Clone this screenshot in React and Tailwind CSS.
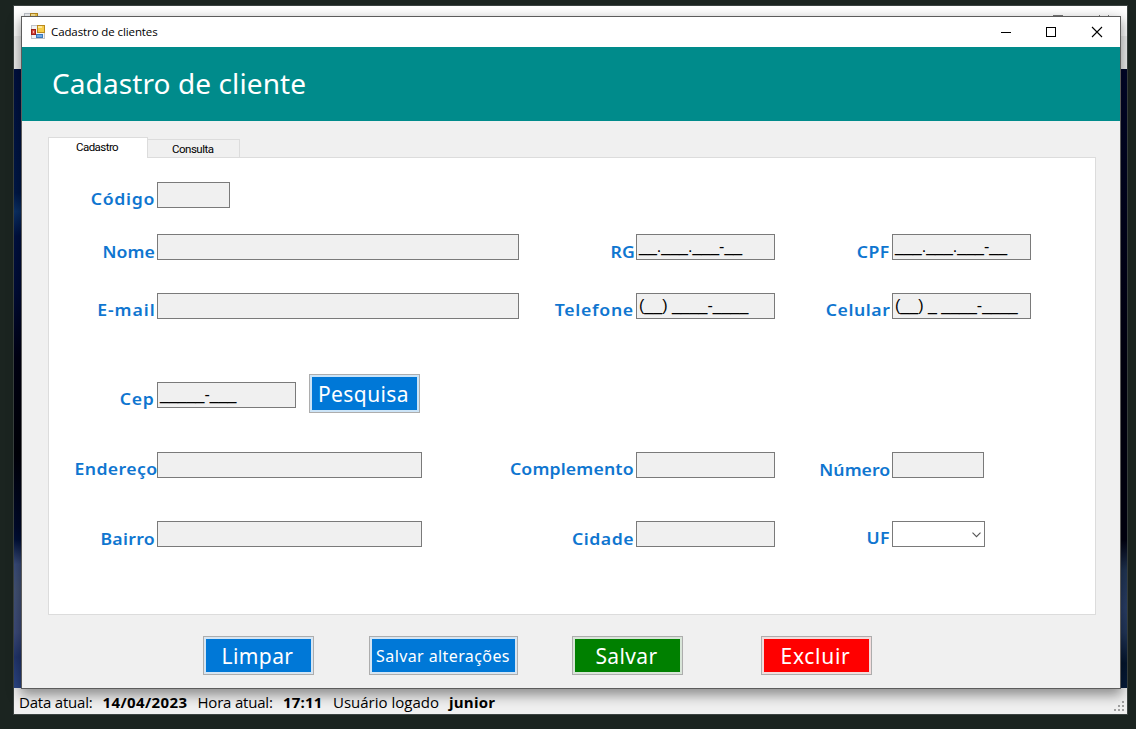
import React from "react";

function FormIcon() {
  return (
    <svg width="14" height="14" viewBox="0 0 14 14" className="shrink-0" shapeRendering="crispEdges">
      <rect x="0" y="0" width="14" height="14" fill="#bfc3c9" />
      <rect x="1" y="1" width="12" height="12" fill="#f1f3f6" />
      <rect x="6" y="0" width="8" height="8" fill="#b98a1e" />
      <rect x="7" y="1" width="6" height="6" fill="#f7cd4a" />
      <rect x="7" y="1" width="4" height="2" fill="#fde79a" />
      <rect x="0" y="4" width="5" height="6" fill="#9c1f1a" />
      <rect x="1" y="5" width="3" height="4" fill="#d6453b" />
      <rect x="2" y="6" width="1" height="2" fill="#f3b5ae" />
      <rect x="5" y="9" width="7" height="4" fill="#3a78bd" />
      <rect x="6" y="10" width="5" height="2" fill="#6fa8e2" />
    </svg>
  );
}

function Label({ text, cls }) {
  return (
    <div className="flex h-[26px] justify-end overflow-visible">
      <span className={"shrink-0 origin-right scale-x-[1.07] text-[16.5px] leading-5 font-semibold whitespace-nowrap text-[#0f76d0] " + cls}>{text}</span>
    </div>
  );
}

function Field({ width, mask = "" }) {
  return (
    <div
      className={
        "h-[26px] border border-[#7a7a7a] bg-[#f0f0f0] pl-[2px] font-['Liberation_Sans',sans-serif] text-[16px] leading-[23px] whitespace-pre text-black " + width
      }
    >
      {mask}
    </div>
  );
}

function ActionButton({ children, cls }) {
  return (
    <button className={"flex h-[39px] items-center justify-center border border-[#adadad] p-[2px] " + cls}>
      {children}
    </button>
  );
}

const row = "grid grid-cols-[108px_379px_100px_156px_100px_auto] items-start";

export default function App() {
  return (
    <div className="relative h-[729px] w-[1136px] overflow-hidden bg-[#1b2420] pt-[5px] pl-[13px] font-['Noto_Sans',sans-serif]">
      <div className="flex h-[710px] w-[1115px] flex-col border border-[#3b4341]">
        <div className="flex h-[30px] shrink-0 bg-white pt-[7px] pl-[10px]">
          <FormIcon />
          <svg width="60" height="12" viewBox="0 0 60 12" className="mt-[2px] mr-[14px] ml-auto" fill="none" stroke="#777" shapeRendering="crispEdges">
            <rect x="0.5" y="0.5" width="9" height="9" />
            <path d="M46 0l10 10M56 0l-10 10" />
          </svg>
        </div>
        <div className="h-[33px] shrink-0 bg-[#f0f0f0]" />
        <div className="flex flex-1 justify-between">
          <div className="w-2 bg-[linear-gradient(180deg,#001040_0%,#001848_20%,#0c3268_23%,#001142_27%,#000c38_36%,#000014_47%,#000008_62%,#000a2c_74%,#001038_76%,#3a4d7c_80%,#445476_84%,#3d4c7c_91%,#22366e_95%,#2c4788_100%)]" />
          <div className="w-2 bg-[linear-gradient(180deg,#00062a_0%,#000010_50%,#000010_76%,#213656_81%,#2a3f69_87%,#22375c_91%,#04162f_96%,#061c3c_100%)]" />
        </div>
        <div className="flex h-[26px] shrink-0 bg-[#f0f0f0] pt-1 pl-[5px] font-['Open_Sans',sans-serif] text-[15px] leading-5 whitespace-nowrap text-black">
          <span className="w-[83.5px] tracking-[-0.2px]">Data atual:</span>
          <span className="w-[95px] font-bold tracking-[0.4px]">14/04/2023</span>
          <span className="w-[85.5px] tracking-[-0.2px]">Hora atual:</span>
          <span className="w-[50px] font-bold tracking-[0.2px]">17:11</span>
          <span className="w-[116px]">Usuário logado</span>
          <span className="font-bold tracking-[0.2px]">junior</span>
          <svg width="12" height="12" viewBox="0 0 12 12" className="mt-[9px] mr-[2px] ml-auto" fill="#a0a0a0" shapeRendering="crispEdges">
            <rect x="9" y="0" width="2" height="2" />
            <rect x="5" y="4" width="2" height="2" />
            <rect x="9" y="4" width="2" height="2" />
            <rect x="1" y="8" width="2" height="2" />
            <rect x="5" y="8" width="2" height="2" />
            <rect x="9" y="8" width="2" height="2" />
          </svg>
        </div>
      </div>

      <div className="absolute top-4 left-[21px] flex h-[673px] w-[1100px] flex-col border border-[#5c5c5c] bg-[#f0f0f0] shadow-[0_5px_12px_1px_rgba(0,0,0,0.42)]">
        <div className="flex h-[30px] shrink-0 items-center bg-white pl-[9px]">
          <FormIcon />
          <span className="ml-[6px] font-['Open_Sans',sans-serif] text-[11.5px] leading-4 tracking-[-0.1px] text-black">Cadastro de clientes</span>
          <svg width="104" height="12" viewBox="0 0 104 12" className="mr-[16px] ml-auto" fill="none" stroke="#000">
            <path d="M1 6.5h10" shapeRendering="crispEdges" />
            <rect x="46.5" y="1.5" width="9" height="9" shapeRendering="crispEdges" />
            <path d="M92 1l10 10M102 1l-10 10" strokeWidth="1.1" />
          </svg>
        </div>
        <div className="flex h-[74px] shrink-0 items-center bg-[#008b8b] pb-[2px] pl-[30px]">
          <h1 className="text-[28px] leading-9 tracking-[0.1px] text-white">Cadastro de cliente</h1>
        </div>

        <div className="flex flex-col pt-4 pl-[26px]">
          <div className="flex h-5 items-end font-['Roboto',sans-serif] text-[11.5px] text-black">
            <div className="z-10 h-[21px] w-[100px] translate-y-px border border-b-0 border-[#dcdcdc] bg-white pl-[27px] leading-[19px] tracking-[-0.55px]">Cadastro</div>
            <div className="h-[18px] w-[92px] border-t border-r border-[#dcdcdc] bg-[#f0f0f0] pl-6 leading-[19px] tracking-[-0.5px]">Consulta</div>
          </div>
          <div className="h-[458px] w-[1048px] border border-[#dcdcdc] bg-white pt-6">
            <div className={row}>
              <Label text="Código" cls="mt-[7px] mr-[1.5px] tracking-[0.65px]" />
              <Field width="w-[73px]" />
            </div>
            <div className={row + " mt-[26px]"}>
              <Label text="Nome" cls="mt-2 mr-[2.2px] tracking-[0px]" />
              <Field width="w-[362px]" />
              <Label text="RG" cls="mt-2 mr-[1.2px] tracking-[0.3px]" />
              <Field width="w-[139px]" mask="__.___.___-__" />
              <Label text="CPF" cls="mt-2 mr-[2.6px] tracking-[0.4px]" />
              <Field width="w-[139px]" mask="___.___.___-__" />
            </div>
            <div className={row + " mt-[33px]"}>
              <Label text="E-mail" cls="mt-[7px] mr-[0.8px] tracking-[0.9px]" />
              <Field width="w-[362px]" />
              <Label text="Telefone" cls="mt-[7px] mr-[2px] tracking-[0.65px]" />
              <Field width="w-[139px]" mask="(__) ____-____" />
              <Label text="Celular" cls="mt-[7px] mr-[2px] tracking-[0.5px]" />
              <Field width="w-[139px]" mask="(__) _ ____-____" />
            </div>
            <div className={row + " mt-[55px] h-[39px]"}>
              <div className="pt-2">
                <Label text="Cep" cls="mt-[7px] mr-[2.6px] tracking-[0.7px]" />
              </div>
              <div className="flex gap-[13px]">
                <div className="pt-2">
                  <Field width="w-[139px]" mask="_____-___" />
                </div>
                <ActionButton cls="w-[111px] bg-[#cce4f7]">
                  <span className="flex h-[33px] w-full items-center justify-center bg-[#0078d7] pt-[2px] pr-[2px] text-[21px] leading-none tracking-[0.4px] text-white">Pesquisa</span>
                </ActionButton>
              </div>
            </div>
            <div className={row + " mt-[39px]"}>
              <Label text="Endereço" cls="mt-[7px] mr-[-0.2px] tracking-[0.35px]" />
              <Field width="w-[265px]" />
              <Label text="Complemento" cls="mt-[7px] mr-[2px] tracking-[0.15px]" />
              <Field width="w-[139px]" />
              <Label text="Número" cls="mt-2 mr-[1.4px] tracking-[0px]" />
              <Field width="w-[92px]" />
            </div>
            <div className={row + " mt-[43px]"}>
              <Label text="Bairro" cls="mt-2 mr-[2px] tracking-[0.25px]" />
              <Field width="w-[265px]" />
              <Label text="Cidade" cls="mt-2 mr-[2px] tracking-[0.5px]" />
              <Field width="w-[139px]" />
              <Label text="UF" cls="mt-[7px] mr-[2.6px] tracking-[0.2px]" />
              <div className="flex h-[26px] w-[93px] items-center justify-end border border-[#7a7a7a] bg-white pt-[2px] pr-[3px]">
                <svg width="9" height="6" viewBox="0 0 9 6" fill="none" stroke="#555" strokeWidth="1.1">
                  <path d="M0.5 0.7l4 4 4-4" />
                </svg>
              </div>
            </div>
          </div>
        </div>

        <div className="mt-[21px] flex pl-[181px] text-[21px] leading-none text-white">
          <ActionButton cls="w-[111px] bg-[#d5e5f3]">
            <span className="flex h-[33px] w-full items-center justify-center bg-[#0078d7] pt-[2px] pr-[2px] tracking-[0.4px]">Limpar</span>
          </ActionButton>
          <ActionButton cls="ml-[55px] w-[149px] bg-[#d5e5f3]">
            <span className="flex h-[33px] w-full items-center justify-center bg-[#0078d7] pr-px text-base leading-none tracking-[0.4px] whitespace-nowrap">Salvar alterações</span>
          </ActionButton>
          <ActionButton cls="ml-[54px] w-[111px] bg-[#d8e5d8]">
            <span className="flex h-[33px] w-full items-center justify-center bg-[#008000] pt-[2px] pr-[2px] tracking-[0.4px]">Salvar</span>
          </ActionButton>
          <ActionButton cls="ml-[78px] w-[111px] bg-[#f3dcdc]">
            <span className="flex h-[33px] w-full items-center justify-center bg-[#ff0000] pt-[2px] pr-[2px] tracking-[0.7px]">Excluir</span>
          </ActionButton>
        </div>
      </div>
    </div>
  );
}
